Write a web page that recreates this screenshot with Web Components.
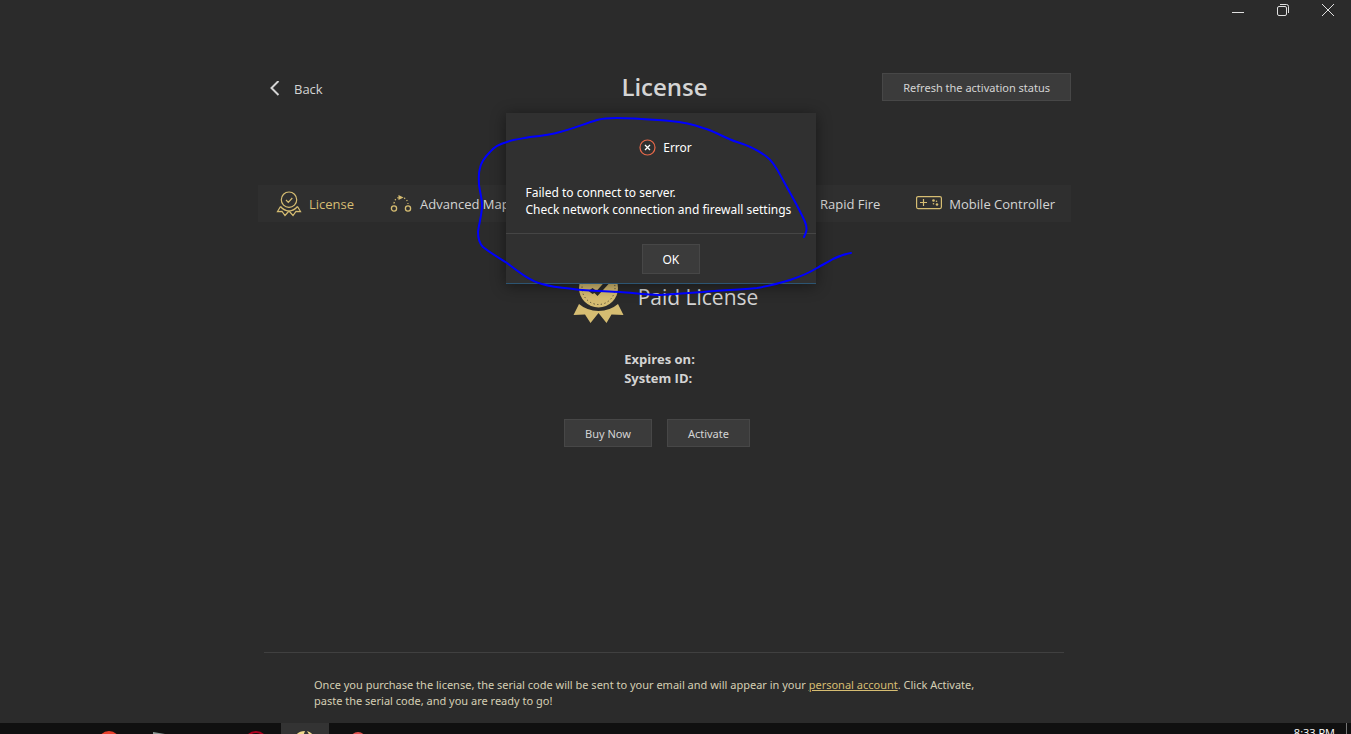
<!DOCTYPE html>
<html lang="en">
<head>
<meta charset="utf-8">
<title>License</title>
<style>
	html, body{
		margin: 0;
		height: 100%;
		overflow: hidden;
		background: #2b2b2b;
	}
	body{
		font: 13px/18px "Open Sans", "Noto Sans", sans-serif;
		color: #d4d4d4;
		--gold: #d6bd72;
		--line: #404040;
		--small-font: "Noto Sans", "Open Sans", sans-serif;
	}
</style>
</head>
<body>
<license-app></license-app>

<script>
(function(){
/**
 *  define a custom element whose shadow root is cloned from a template.
 *  @params: String, String
**/
function define(name_, html_){
	var templateEle = document.createElement('template');
	templateEle.innerHTML = html_;
	customElements.define(name_, class extends HTMLElement{
		constructor(){
			super();
			this.attachShadow({mode:'open'}).appendChild(templateEle.content.cloneNode(true));
		}
	});
}

// minimize, restore and close buttons.
define('window-controls', `
	<style>
		:host{
			display: flex;
			justify-content: flex-end;
			padding-right: 1px;
		}
		button{
			display: grid;
			place-items: center;
			width: 45px;
			height: 20px;
			padding: 0;
			border: 0;
			background: none;
			color: #e0e0e0;
		}
		svg{
			display: block;
			fill: none;
			stroke: currentColor;
		}
	</style>
	<button aria-label="Minimize"><svg width="14" height="14"><path d="M1 9.5h12"/></svg></button>
	<button aria-label="Restore"><svg width="14" height="14"><rect x="1.5" y="3.5" width="9" height="9" rx="1.5"/><path d="M4 1.5h6.500q2 0 2 2V10"/></svg></button>
	<button aria-label="Close"><svg width="14" height="14"><path d="M1 1l12 12M13 1L1 13"/></svg></button>
`);

// flat gray button.
define('flat-button', `
	<style>
		:host{
			display: block;
		}
		button{
			display: block;
			box-sizing: border-box;
			width: 100%;
			height: 28px;
			padding: 1px 20px 0;
			border: 1px solid #474747;
			background: #3b3b3b;
			color: inherit;
			font: 11px/18px var(--small-font);
			white-space: nowrap;
		}
		:host([large]) button{
			height: 30px;
			font-size: 12px;
		}
	</style>
	<button><slot></slot></button>
`);

define('page-header', `
	<style>
		:host{
			display: grid;
			grid-template-columns: 1fr auto 1fr;
			align-items: center;
		}
		.back{
			display: flex;
			align-items: center;
			gap: 13px;
			justify-self: start;
			padding: 4px 11px 0;
			border: 0;
			background: none;
			color: inherit;
			font: inherit;
		}
		.back svg{
			fill: none;
			stroke: #d4d4d4;
			stroke-width: 2;
		}
		h1{
			margin: 0;
			font-size: 24px;
			line-height: 28px;
			font-weight: 600;
		}
		flat-button{
			justify-self: end;
		}
	</style>
	<button class="back"><svg width="12" height="16"><path d="M9.5 0L2.5 7l7 7"/></svg><span>Back</span></button>
	<h1>License</h1>
	<flat-button>Refresh the activation status</flat-button>
`);

define('tab-item', `
	<style>
		:host{
			display: block;
		}
		button{
			display: flex;
			align-items: center;
			gap: 7px;
			height: 37px;
			padding: 0;
			border: 0;
			background: none;
			color: inherit;
			font: inherit;
			white-space: nowrap;
		}
		:host([selected]) button{
			color: var(--gold);
		}
		::slotted(svg){
			display: block;
			fill: none;
			stroke: var(--gold);
		}
	</style>
	<button><slot name="icon"></slot><slot></slot></button>
`);

define('tab-bar', `
	<style>
		:host{
			display: flex;
			gap: 36px;
			padding: 0 16px 0 18px;
			background: #2f2f2f;
		}
		.rapid{
			margin-left: auto;
		}
	</style>
	<tab-item selected>
		<svg slot="icon" width="26" height="26" stroke-width="1.2">
			<circle cx="13" cy="8.7" r="7.7"/>
			<path d="M10 9l2.3 2.3 4-4.3M4.5 15.5L1.5 20.500l4.500-.2 3 4.200 4-4.500 4 4.500 3-4.200 4.500.2-3-5M4.500 15.500q3.500 4.200 8.500 4.500 5-.3 8.500-4.500"/>
		</svg>
		License
	</tab-item>
	<tab-item>
		<svg slot="icon" width="23" height="20" stroke-width="1.3">
			<circle cx="4" cy="14.5" r="2.6"/>
			<circle cx="18" cy="14.5" r="2.6"/>
			<path d="M4 9.5Q5 4 9 3.5M14 4q3.500 1.5 4 6" stroke-dasharray="1.3 2"/>
			<path d="M8.5 1v5l5-2.5z" fill="#d6bd72" stroke="none"/>
		</svg>
		Advanced Mapping
	</tab-item>
	<tab-item class="rapid">
		<svg slot="icon" width="22" height="20"><path d="M2 15L12 5l3 3L5 18z"/></svg>
		Rapid Fire
	</tab-item>
	<tab-item>
		<svg slot="icon" width="26" height="18" stroke-width="1.2">
			<rect x=".6" y="1.6" width="24.8" height="12" rx="1.5"/>
			<path d="M4 7.5h7M7.5 4v7"/>
			<g fill="#d6bd72" stroke="none"><circle cx="17.500" cy="5.5" r="1.3"/><circle cx="21" cy="9.500" r="1.3"/><circle cx="17.500" cy="8.800" r=".8"/><circle cx="20.500" cy="6.300" r=".8"/></g>
		</svg>
		Mobile Controller
	</tab-item>
`);

// badge, license kind and its details.
define('license-status', `
	<style>
		:host{
			display: flex;
			flex-direction: column;
			align-items: center;
		}
		.kind{
			display: flex;
			align-items: center;
			gap: 14px;
			padding-left: 2px;
		}
		h2{
			margin: 0;
			font-size: 21px;
			line-height: 28px;
			font-weight: 400;
		}
		dl{
			margin: 26px 10px 0 0;
			line-height: 19px;
			font-weight: 700;
		}
		dd{
			margin: 0;
		}
		.actions{
			display: flex;
			gap: 15px;
			margin: 31px 15px 0 0;
		}
	</style>
	<div class="kind">
		<svg width="51" height="54" viewBox="0 0 51 54">
			<g fill="#d6bd72">
				<circle cx="25.5" cy="18" r="19.5"/>
				<path d="M6 34L.5 45l11.500-.5L17.500 53l8-10 8 10 5-8.500 12 .5L45 34q-8 6.800-19.500 7Q14 40.800 6 34z"/>
			</g>
			<circle cx="25.5" cy="18" r="16.500" fill="none" stroke="#4a4330" stroke-dasharray="1.2 2.5"/>
			<path d="M15.500 21l4-3 4 3 9-10 4 2-12 13-3-3-2 1z" fill="#2b2b2b"/>
		</svg>
		<h2>Paid License</h2>
	</div>
	<dl>
		<dt>Expires on:</dt><dd></dd>
		<dt>System ID:</dt><dd></dd>
	</dl>
	<div class="actions">
		<flat-button>Buy Now</flat-button>
		<flat-button>Activate</flat-button>
	</div>
`);

define('purchase-note', `
	<style>
		:host{
			display: block;
			margin: 0 7px 0 6px;
			padding: 24px 50px 14px;
			border-top: 1px solid var(--line);
			color: #d5cfb4;
			font: 11px/16px var(--small-font);
		}
		p{
			margin: 0;
		}
		a{
			color: var(--gold);
		}
	</style>
	<p>Once you purchase the license, the serial code will be sent to your email and will appear in your <a href="#account">personal account</a>. Click Activate,<br>paste the serial code, and you are ready to go!</p>
`);

define('error-dialog', `
	<style>
		:host{
			display: block;
			box-sizing: border-box;
			border-bottom: 1px solid #2c5573;
			background: #303030;
			box-shadow: 0 2px 14px rgba(0, 0, 0, .45);
			color: #fff;
			font: 12px/17px var(--small-font);
		}
		.title{
			display: flex;
			align-items: center;
			justify-content: center;
			gap: 7px;
			padding: 26px 0 0 10px;
		}
		p{
			margin: 0;
			padding: 28px 0 15px 20px;
			white-space: nowrap;
		}
		.foot{
			display: flex;
			justify-content: center;
			padding: 10px 0 9px 20px;
			border-top: 1px solid #454545;
		}
		flat-button{
			width: 58px;
		}
	</style>
	<div class="title">
		<svg width="17" height="17" fill="none">
			<circle cx="8.5" cy="8.5" r="7.5" stroke="#e8694a" stroke-width="1.2"/>
			<path d="M6 6l5 5M11 6l-5 5" stroke="#fff" stroke-width="1.3"/>
		</svg>
		<span>Error</span>
	</div>
	<p><slot></slot></p>
	<div class="foot"><flat-button large>OK</flat-button></div>
`);

// only the top edge of the bar shows above the bottom of the screen.
define('task-bar', `
	<style>
		:host{
			display: flex;
			height: 11px;
			overflow: hidden;
			background: #101010;
			color: #fff;
			font-size: 12px;
			line-height: 16px;
		}
		.apps{
			display: flex;
			margin-left: 85px;
		}
		.apps svg{
			display: block;
			width: 48px;
			margin-right: 1px;
		}
		.active{
			background: #333;
		}
		time{
			margin-left: auto;
			padding: 2px 11px 0 0;
			border-right: 1px solid #777;
			margin-right: 4px;
			font-size: 11px;
		}
	</style>
	<div class="apps">
		<svg height="40"><circle cx="24" cy="19" r="11" fill="#e8402c"/></svg>
		<svg height="40"><path d="M19 9l12 2v16H19z" fill="#8d9a96"/></svg>
		<svg height="40"></svg>
		<svg height="40"><circle cx="24" cy="20" r="11" fill="none" stroke="#b00020" stroke-width="2"/></svg>
		<svg class="active" height="40"><path d="M15 12q3-4 9-4l-3 8zM26 8q4 1 6 4l-3 1z" fill="#f0d98c"/></svg>
		<svg height="40"><circle cx="28" cy="17" r="8" fill="#e0504c"/></svg>
	</div>
	<time>8:33 PM</time>
`);

define('license-app', `
	<style>
		:host{
			display: flex;
			flex-direction: column;
			height: 100vh;
			position: relative;
		}
		main{
			flex: 1;
			display: flex;
			flex-direction: column;
			box-sizing: border-box;
			width: 100%;
			max-width: 835px;
			margin: 0 auto;
			padding: 53px 22px 0 0;
		}
		tab-bar{
			margin-top: 84px;
		}
		license-status{
			margin-top: 48px;
		}
		purchase-note{
			margin-top: auto;
		}
		error-dialog{
			position: absolute;
			top: 113px;
			left: calc(50% - 15px);
			width: 310px;
			transform: translateX(-50%);
		}
		.ink{
			position: absolute;
			top: 113px;
			left: calc(50% - 202px);
			pointer-events: none;
		}
	</style>
	<window-controls></window-controls>
	<main>
		<page-header></page-header>
		<tab-bar></tab-bar>
		<license-status></license-status>
		<purchase-note></purchase-note>
	</main>
	<task-bar></task-bar>
	<error-dialog>Failed to connect to server.<br>Check network connection and firewall settings</error-dialog>
	<svg class="ink" width="380" height="190" viewBox="474 113 380 190" fill="none" stroke="#00f" stroke-width="2" stroke-linecap="round">
		<path d="M804 237C806 233 808 229 805 222C800 210 790 193 783 180C778 171 774 162 767 157C758 150 747 145 737 142C724 138 715 131 703 128C692 124 681 122 670 121C655 120 636 118 617 118C610 118 604 118 597 120C584 124 572 129 560 132C550 135 540 136 530 137C521 139 514 139 507 142C499 144 494 147 490 152C484 158 481 163 480 168C478 174 479 180 479 185C480 192 482 199 482 205C482 215 479 223 478 232C478 238 479 243 483 247C489 252 499 258 507 263C519 272 530 281 542 284C552 287 563 288 573 289C588 291 604 291 620 292C634 293 647 295 660 295C674 294 688 293 703 292C721 290 740 290 757 288C769 286 780 283 790 280C799 277 809 273 817 268C822 265 828 262 833 259C839 256 845 254 851 253"/>
	</svg>
`);
})();
</script>
</body>
</html>
